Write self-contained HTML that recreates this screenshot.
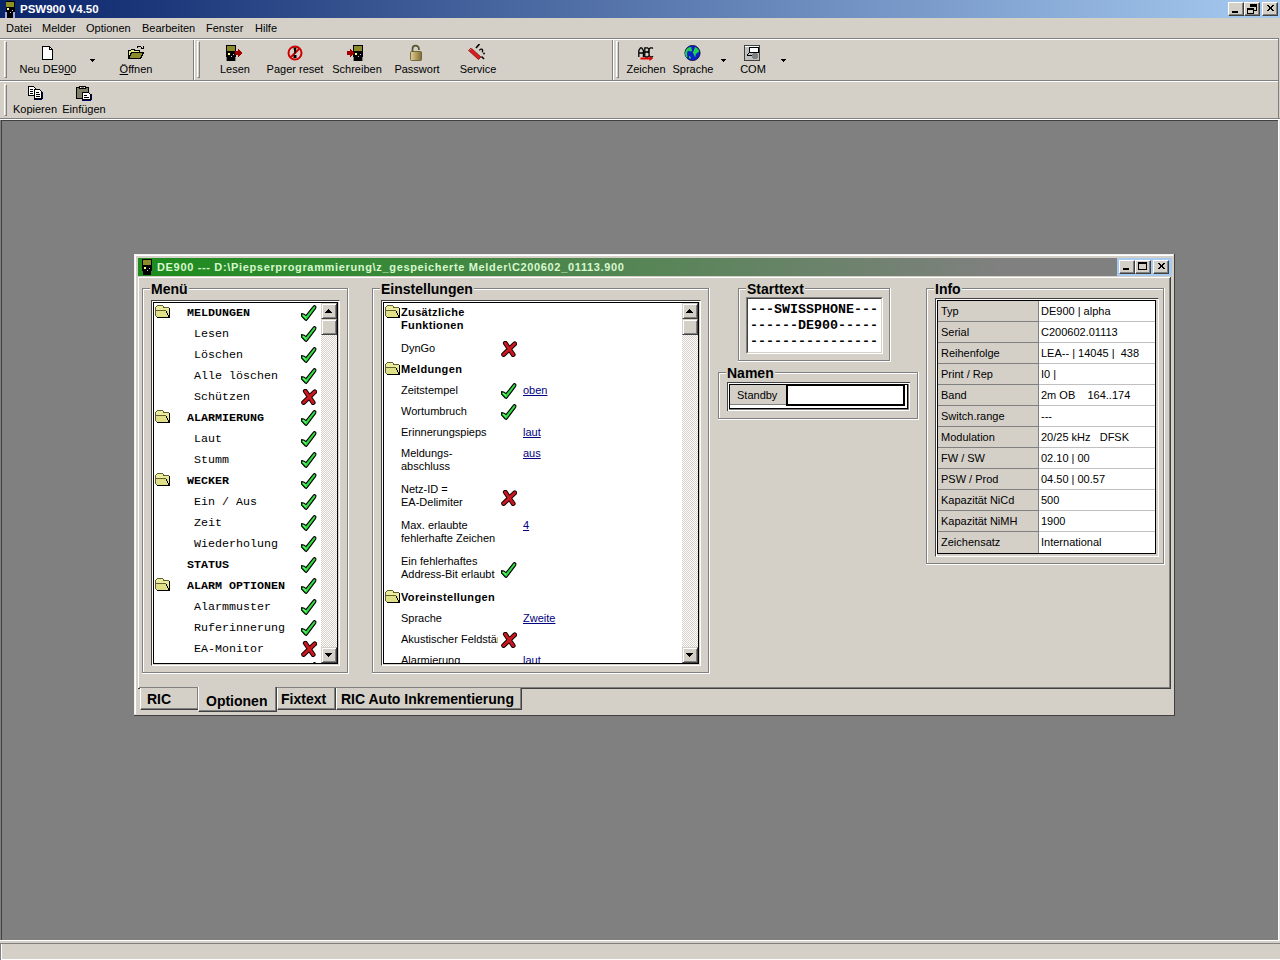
<!DOCTYPE html>
<html><head><meta charset="utf-8">
<style>
*{box-sizing:border-box;margin:0;padding:0}
html,body{width:1280px;height:960px;overflow:hidden;background:#d4d0c8}
body{position:relative;font-family:"Liberation Sans",sans-serif;font-size:11px;color:#000}
.a{position:absolute}
.t{position:absolute;white-space:pre;line-height:1}
.hl{position:absolute;height:1px}
.vl{position:absolute;width:1px}
.btn{position:absolute;background:#d4d0c8;border-top:1px solid #fff;border-left:1px solid #fff;border-right:1px solid #404040;border-bottom:1px solid #404040;box-shadow:inset -1px -1px 0 #808080}
</style></head><body>

<!-- main title bar -->
<div class="a" style="left:0;top:0;width:1280px;height:18px;background:linear-gradient(to right,#0a246a,#a6caf0)"></div>
<div class="t" style="left:20px;top:4px;font-weight:bold;font-size:11.5px;color:#fff">PSW900 V4.50</div>

<svg class="a" style="left:5px;top:1px" width="11" height="17" shape-rendering="crispEdges">
<rect x="1" y="0" width="9" height="16" fill="#000"/><rect x="1" y="1" width="8" height="5" fill="#8c9020"/>
<rect x="2" y="7" width="2" height="2" fill="#ffffb0"/><rect x="7" y="9" width="1" height="1" fill="#e0f0c0"/><rect x="5" y="11" width="1" height="1" fill="#e0d0ff"/>
<rect x="0" y="11" width="2" height="6" fill="#a0a8e0"/><rect x="8" y="11" width="2" height="6" fill="#a0a8e0"/><rect x="2" y="15" width="6" height="2" fill="#000"/></svg>
<!-- menu bar -->
<div class="t" style="left:6px;top:23px">Datei</div>
<div class="t" style="left:42px;top:23px">Melder</div>
<div class="t" style="left:86px;top:23px">Optionen</div>
<div class="t" style="left:142px;top:23px">Bearbeiten</div>
<div class="t" style="left:206px;top:23px">Fenster</div>
<div class="t" style="left:255px;top:23px">Hilfe</div>

<!-- coolbar -->
<div class="hl" style="left:0;top:38px;width:1279px;background:#808080"></div>
<div class="hl" style="left:0;top:39px;width:1279px;background:#fff"></div>


<!-- coolbar bands -->
<div class="hl" style="left:0;top:80px;width:1279px;background:#808080"></div>
<div class="hl" style="left:0;top:81px;width:1279px;background:#fff"></div>
<div class="vl" style="left:1278px;top:38px;height:81px;background:#808080"></div>
<div class="vl" style="left:193px;top:40px;height:40px;background:#808080"></div>
<div class="vl" style="left:194px;top:40px;height:40px;background:#fff"></div>
<div class="vl" style="left:612px;top:40px;height:40px;background:#808080"></div>
<div class="vl" style="left:613px;top:40px;height:40px;background:#fff"></div>
<!-- grippers -->
<div class="a" style="left:4px;top:41px;width:3px;height:37px;border-left:1px solid #fff;border-top:1px solid #fff;border-right:1px solid #808080;border-bottom:1px solid #808080"></div>
<div class="a" style="left:197px;top:41px;width:3px;height:37px;border-left:1px solid #fff;border-top:1px solid #fff;border-right:1px solid #808080;border-bottom:1px solid #808080"></div>
<div class="a" style="left:616px;top:41px;width:3px;height:37px;border-left:1px solid #fff;border-top:1px solid #fff;border-right:1px solid #808080;border-bottom:1px solid #808080"></div>
<div class="a" style="left:4px;top:84px;width:3px;height:32px;border-left:1px solid #fff;border-top:1px solid #fff;border-right:1px solid #808080;border-bottom:1px solid #808080"></div>

<!-- toolbar labels -->
<div class="t" style="left:-2px;width:100px;text-align:center;top:64px">Neu DE9<u>0</u>0</div>
<div class="t" style="left:86px;width:100px;text-align:center;top:64px"><u>Ö</u>ffnen</div>
<div class="t" style="left:185px;width:100px;text-align:center;top:64px">Lesen</div>
<div class="t" style="left:245px;width:100px;text-align:center;top:64px">Pager reset</div>
<div class="t" style="left:307px;width:100px;text-align:center;top:64px">Schreiben</div>
<div class="t" style="left:367px;width:100px;text-align:center;top:64px">Passwort</div>
<div class="t" style="left:428px;width:100px;text-align:center;top:64px">Service</div>
<div class="t" style="left:596px;width:100px;text-align:center;top:64px">Zeichen</div>
<div class="t" style="left:643px;width:100px;text-align:center;top:64px">Sprache</div>
<div class="t" style="left:703px;width:100px;text-align:center;top:64px">COM</div>
<div class="t" style="left:-15px;width:100px;text-align:center;top:104px">Kopieren</div>
<div class="t" style="left:34px;width:100px;text-align:center;top:104px">Einfügen</div>
<!-- dropdown arrows -->
<svg class="a" style="left:90px;top:59px" width="5" height="3" shape-rendering="crispEdges"><path d="M0 0h5v1h-1v1h-1v1h-1v-1h-1v-1h-1z" fill="#000"/></svg>
<svg class="a" style="left:721px;top:59px" width="5" height="3" shape-rendering="crispEdges"><path d="M0 0h5v1h-1v1h-1v1h-1v-1h-1v-1h-1z" fill="#000"/></svg>
<svg class="a" style="left:781px;top:59px" width="5" height="3" shape-rendering="crispEdges"><path d="M0 0h5v1h-1v1h-1v1h-1v-1h-1v-1h-1z" fill="#000"/></svg>

<!-- icons -->
<!-- new doc -->
<svg class="a" style="left:40px;top:45px" width="16" height="16" shape-rendering="crispEdges">
<path d="M2.5 1.5h7l3 3v10h-10z" fill="#fff" stroke="#000"/><path d="M9.5 1.5v3h3" fill="none" stroke="#000"/></svg>
<!-- open folder -->
<svg class="a" style="left:128px;top:45px" width="16" height="16" shape-rendering="crispEdges">
<path d="M0.5 5.5h2l1-1h3v1h5v2h-8l-3 6z" fill="#e8e880" stroke="#000"/>
<path d="M0.5 13.5l3-6h12l-3 6z" fill="#8b8b2a" stroke="#000"/>
<path d="M9 2.5c2-2 4-1 5 1" fill="none" stroke="#000"/><path d="M13 3h2v-2" fill="none" stroke="#000"/></svg>
<!-- Lesen: pager + arrow right -->
<svg class="a" style="left:226px;top:45px" width="17" height="17" shape-rendering="crispEdges">
<rect x="0" y="0" width="10" height="16" rx="1" fill="#000"/>
<rect x="1" y="1" width="8" height="5" fill="#8b8b2a"/>
<rect x="2" y="8" width="2" height="2" fill="#ffff80"/><rect x="7" y="9" width="1" height="1" fill="#c0c0ff"/><rect x="5" y="11" width="1" height="1" fill="#c0c0ff"/>
<rect x="0" y="12" width="1" height="4" fill="#808080"/><rect x="9" y="12" width="1" height="4" fill="#808080"/>
<path d="M9 6h3v-2l4 4l-4 4v-2h-3z" fill="#a00000"/></svg>
<!-- Pager reset -->
<svg class="a" style="left:287px;top:45px" width="16" height="16">
<circle cx="8" cy="8" r="6.5" fill="none" stroke="#d00000" stroke-width="2"/>
<path d="M3.5 12.5l9-9" stroke="#d00000" stroke-width="2"/>
<path d="M6.5 2.5h3l-1 6h-1z" fill="#000"/><rect x="6.5" y="10" width="3" height="3" fill="#000"/></svg>
<!-- Schreiben: arrow + pager -->
<svg class="a" style="left:347px;top:45px" width="17" height="17" shape-rendering="crispEdges">
<rect x="6" y="0" width="10" height="16" rx="1" fill="#000"/>
<rect x="7" y="1" width="8" height="5" fill="#8b8b2a"/>
<rect x="8" y="8" width="2" height="2" fill="#ffff80"/><rect x="13" y="9" width="1" height="1" fill="#c0c0ff"/><rect x="11" y="11" width="1" height="1" fill="#c0c0ff"/>
<rect x="6" y="12" width="1" height="4" fill="#808080"/><rect x="15" y="12" width="1" height="4" fill="#808080"/>
<path d="M0 6h3v-2l4 4l-4 4v-2h-3z" fill="#a00000"/></svg>
<!-- Passwort: padlock -->
<svg class="a" style="left:409px;top:44px" width="15" height="17">
<defs><linearGradient id="lg" x1="0" x2="1"><stop offset="0" stop-color="#e0d098"/><stop offset="1" stop-color="#806c30"/></linearGradient></defs>
<path d="M3.5 8.5V4.8a3.2 3.2 0 0 1 6.4 0V6" fill="none" stroke="#5a5030" stroke-width="1.7"/>
<rect x="1.5" y="7.5" width="11" height="9" rx="1" fill="url(#lg)" stroke="#605028" stroke-width="0.8"/></svg>
<!-- Service: swiss knife -->
<svg class="a" style="left:468px;top:44px" width="18" height="17">
<path d="M0.5 6.5l2.5-2.5l10 9l-2.5 2.5z" fill="#d81c20" stroke="#700" stroke-width="0.7"/>
<path d="M1.5 6.5l2-2" stroke="#ff8080" stroke-width="0.8"/>
<path d="M8 4l3.5-4" stroke="#000" stroke-width="1.6"/>
<path d="M11.5 6.5a1.6 1.6 0 1 1 2.4 1.6" fill="none" stroke="#000" stroke-width="1.3"/>
<circle cx="16" cy="9.5" r="0.9" fill="#000"/><path d="M13.5 12.5l2.5 2.5" stroke="#000" stroke-width="1.6"/></svg>
<!-- Zeichen ABC -->
<svg class="a" style="left:638px;top:47px" width="17" height="15">
<path d="M0.8 10V3.5L2.5 0.8h1.2L5.4 3.5V10M0.8 6h4.6M6.8 10V0.8h2.7l1.4 1.3v1.6L9.6 5H6.8M9.6 5l1.5 1.2v2.4L9.8 10H6.8M15 1.6L14 0.8h-1.6l-1.3 1.4v6.6l1.3 1.2H14l1-0.8" fill="none" stroke="#000" stroke-width="1.3"/>
<path d="M2.5 10.5h9v-1.5l3.5 2.5l-3.5 2.5v-1.5h-9z" fill="#e00000"/></svg>
<!-- Sprache globe -->
<svg class="a" style="left:684px;top:45px" width="17" height="17">
<circle cx="8.5" cy="8" r="7.6" fill="#0c20c8" stroke="#000030" stroke-width="0.8"/>
<path d="M2 5c1-2 3-3 5-3c1 1 0 2 1 3s-2 2-3 1s-2 1-2 3s1 2 0 4c-1-1-2-3-2-5z" fill="#20d050"/>
<path d="M11 2c2 1 4 2 4 5c-1 0-2 1-3 2s0 3-1 3c-1-1-1-3-2-4s1-2 1-3z" fill="#20d050"/><path d="M5 11c1 0 2 1 2 2s-1 1-2 0z" fill="#20d050"/></svg>
<!-- COM -->
<svg class="a" style="left:744px;top:45px" width="17" height="16" shape-rendering="crispEdges">
<rect x="0.5" y="0.5" width="15" height="15" fill="#c0c0c0" stroke="#404040"/><rect x="1" y="1" width="14" height="1" fill="#fff"/>
<rect x="5" y="2" width="9" height="5" fill="#fff" stroke="#000" stroke-width="1"/><path d="M3 10l3-3M3 10h5" stroke="#000"/><circle cx="11" cy="11" r="3" fill="#808080"/></svg>
<!-- Kopieren -->
<svg class="a" style="left:28px;top:86px" width="16" height="14" shape-rendering="crispEdges">
<path d="M0.5 0.5h5l2 2v7h-7z" fill="#fff" stroke="#000"/><path d="M2 3h3M2 5h3M2 7h3" stroke="#000"/>
<path d="M6.5 3.5h5l2 2v7h-7z" fill="#fff" stroke="#000" /><path d="M8 6h3M8 8h4M8 10h4" stroke="#000"/><path d="M6 13h8M14 6v7" stroke="#000040"/></svg>
<!-- Einfügen -->
<svg class="a" style="left:76px;top:86px" width="16" height="15" shape-rendering="crispEdges">
<path d="M0.5 1.5h12v11h-12z" fill="#808068" stroke="#000"/><path d="M3.5 0.5h6v2h-6z" fill="#fff" stroke="#000"/><path d="M5 1h3" stroke="#808068"/>
<path d="M6.5 6.5h6l2 2v5h-8z" fill="#fff" stroke="#000"/><path d="M8 9h3M8 11h5" stroke="#000"/><path d="M6 14h9M15 8v6" stroke="#000060"/></svg>

<!-- title bar buttons -->
<div class="btn" style="left:1228px;top:2px;width:16px;height:14px"></div>
<div class="btn" style="left:1244px;top:2px;width:16px;height:14px"></div>
<div class="btn" style="left:1262px;top:2px;width:16px;height:14px"></div>
<svg class="a" style="left:1228px;top:2px" width="50" height="14" shape-rendering="crispEdges">
<rect x="4" y="9" width="6" height="2" fill="#000"/>
<path d="M22 3h6v5h-2M22 3v2M22 4h6" fill="none" stroke="#000" stroke-width="1"/>
<rect x="19.5" y="6.5" width="6" height="5" fill="none" stroke="#000"/><rect x="19" y="6" width="7" height="2" fill="#000"/><rect x="22" y="2" width="7" height="2" fill="#000"/><rect x="28" y="3" width="1" height="6" fill="#000"/>
<path d="M38 3l2 0l2 2l2-2h2l-3 3l3 3h-2l-2-2l-2 2h-2l3-3z" fill="#000"/>
</svg>

<!-- MDI client -->
<div class="a" style="left:0;top:118px;width:1280px;height:1px;background:#808080"></div>
<div class="a" style="left:0;top:119px;width:1280px;height:1px;background:#fff"></div>
<div class="a" style="left:1px;top:120px;width:1279px;height:820px;background:#808080;border-top:1px solid #404040;border-left:1px solid #404040"></div>
<div class="vl" style="left:0;top:120px;height:820px;background:#808080"></div>
<div class="hl" style="left:0;top:940px;width:1280px;background:#fff"></div>
<div class="a" style="left:1278px;top:120px;width:2px;height:821px;background:#fff;border-right:1px solid #e8e8e8"></div>
<!-- status bar -->
<div class="hl" style="left:0;top:943px;width:1280px;background:#808080"></div>
<div class="hl" style="left:0;top:959px;width:1280px;background:#fff"></div>
<div class="vl" style="left:0;top:943px;height:17px;background:#808080"></div><div class="vl" style="left:1px;top:944px;height:15px;background:#fff"></div>

<!-- MDI CHILD START -->
<div class="a" style="left:134px;top:254px;width:1041px;height:462px;background:#d4d0c8;"></div>
<div class="hl" style="left:134px;top:254px;width:1040px;background:#f0f0f0"></div>
<div class="vl" style="left:134px;top:254px;height:461px;background:#f0f0f0"></div>
<div class="hl" style="left:135px;top:255px;width:1038px;background:#fff"></div>
<div class="vl" style="left:135px;top:255px;height:459px;background:#fff"></div>
<div class="hl" style="left:134px;top:715px;width:1041px;background:#404040"></div>
<div class="vl" style="left:1174px;top:254px;height:462px;background:#404040"></div>
<div class="a" style="left:138px;top:258px;width:1034px;height:18px;background:linear-gradient(to right,#1c8c1c 0%,#808080 84%)"></div>
<div class="a" style="left:1117px;top:258px;width:55px;height:18px;background:#a6caf0;"></div>
<div class="t" style="left:157px;top:262px;font-weight:bold;font-size:11px;letter-spacing:0.66px;color:#d8f8d0">DE900 --- D:\Piepserprogrammierung\z_gespeicherte Melder\C200602_01113.900</div>
<svg class="a" style="left:141px;top:259px" width="12" height="17" shape-rendering="crispEdges">
<rect x="1" y="0" width="10" height="16" fill="#000"/><rect x="2" y="1" width="8" height="5" fill="#8b8b2a"/>
<rect x="3" y="8" width="2" height="2" fill="#ffff80"/><rect x="8" y="9" width="1" height="1" fill="#c0c0ff"/><rect x="6" y="11" width="1" height="1" fill="#c0c0ff"/>
<rect x="0" y="12" width="2" height="4" fill="#1c8c1c"/><rect x="10" y="12" width="2" height="4" fill="#1c8c1c"/></svg>
<div class="btn" style="left:1119px;top:260px;width:16px;height:14px"></div>
<div class="btn" style="left:1135px;top:260px;width:16px;height:14px"></div>
<div class="btn" style="left:1153px;top:260px;width:16px;height:14px"></div>
<svg class="a" style="left:1119px;top:260px" width="50" height="14" shape-rendering="crispEdges">
<rect x="4" y="8" width="6" height="2" fill="#000"/>
<rect x="19.5" y="2.5" width="8" height="7" fill="none" stroke="#000"/><rect x="19" y="2" width="9" height="2" fill="#000"/>
<path d="M38 3h2l2 2l2-2h2l-3 3l3 3h-2l-2-2l-2 2h-2l3-3z" fill="#000"/></svg>
<div class="hl" style="left:138px;top:277px;width:1032px;background:#fff"></div>
<div class="vl" style="left:138px;top:277px;height:411px;background:#fff"></div>
<div class="vl" style="left:1170px;top:277px;height:412px;background:#404040"></div>
<div class="vl" style="left:1169px;top:278px;height:410px;background:#808080"></div>
<div class="hl" style="left:138px;top:688px;width:1033px;background:#404040"></div>
<div class="hl" style="left:139px;top:687px;width:1031px;background:#808080"></div>
<div class="hl" style="left:142px;top:288px;width:206px;background:#808080"></div>
<div class="vl" style="left:142px;top:288px;height:385px;background:#808080"></div>
<div class="hl" style="left:143px;top:289px;width:204px;background:#fff"></div>
<div class="vl" style="left:143px;top:289px;height:383px;background:#fff"></div>
<div class="hl" style="left:142px;top:672px;width:206px;background:#808080"></div>
<div class="vl" style="left:347px;top:288px;height:385px;background:#808080"></div>
<div class="hl" style="left:142px;top:673px;width:207px;background:#fff"></div>
<div class="vl" style="left:348px;top:288px;height:386px;background:#fff"></div>
<div class="t" style="left:150px;top:282px;font-weight:bold;font-size:14px;background:#d4d0c8;padding:0 1px">Menü</div>
<div class="hl" style="left:372px;top:288px;width:337px;background:#808080"></div>
<div class="vl" style="left:372px;top:288px;height:385px;background:#808080"></div>
<div class="hl" style="left:373px;top:289px;width:335px;background:#fff"></div>
<div class="vl" style="left:373px;top:289px;height:383px;background:#fff"></div>
<div class="hl" style="left:372px;top:672px;width:337px;background:#808080"></div>
<div class="vl" style="left:708px;top:288px;height:385px;background:#808080"></div>
<div class="hl" style="left:372px;top:673px;width:338px;background:#fff"></div>
<div class="vl" style="left:709px;top:288px;height:386px;background:#fff"></div>
<div class="t" style="left:380px;top:282px;font-weight:bold;font-size:14px;background:#d4d0c8;padding:0 1px">Einstellungen</div>
<div class="hl" style="left:738px;top:288px;width:152px;background:#808080"></div>
<div class="vl" style="left:738px;top:288px;height:73px;background:#808080"></div>
<div class="hl" style="left:739px;top:289px;width:150px;background:#fff"></div>
<div class="vl" style="left:739px;top:289px;height:71px;background:#fff"></div>
<div class="hl" style="left:738px;top:360px;width:152px;background:#808080"></div>
<div class="vl" style="left:889px;top:288px;height:73px;background:#808080"></div>
<div class="hl" style="left:738px;top:361px;width:153px;background:#fff"></div>
<div class="vl" style="left:890px;top:288px;height:74px;background:#fff"></div>
<div class="t" style="left:746px;top:282px;font-weight:bold;font-size:14px;background:#d4d0c8;padding:0 1px">Starttext</div>
<div class="hl" style="left:718px;top:372px;width:200px;background:#808080"></div>
<div class="vl" style="left:718px;top:372px;height:47px;background:#808080"></div>
<div class="hl" style="left:719px;top:373px;width:198px;background:#fff"></div>
<div class="vl" style="left:719px;top:373px;height:45px;background:#fff"></div>
<div class="hl" style="left:718px;top:418px;width:200px;background:#808080"></div>
<div class="vl" style="left:917px;top:372px;height:47px;background:#808080"></div>
<div class="hl" style="left:718px;top:419px;width:201px;background:#fff"></div>
<div class="vl" style="left:918px;top:372px;height:48px;background:#fff"></div>
<div class="t" style="left:726px;top:366px;font-weight:bold;font-size:14px;background:#d4d0c8;padding:0 1px">Namen</div>
<div class="hl" style="left:926px;top:288px;width:238px;background:#808080"></div>
<div class="vl" style="left:926px;top:288px;height:276px;background:#808080"></div>
<div class="hl" style="left:927px;top:289px;width:236px;background:#fff"></div>
<div class="vl" style="left:927px;top:289px;height:274px;background:#fff"></div>
<div class="hl" style="left:926px;top:563px;width:238px;background:#808080"></div>
<div class="vl" style="left:1163px;top:288px;height:276px;background:#808080"></div>
<div class="hl" style="left:926px;top:564px;width:239px;background:#fff"></div>
<div class="vl" style="left:1164px;top:288px;height:277px;background:#fff"></div>
<div class="t" style="left:934px;top:282px;font-weight:bold;font-size:14px;background:#d4d0c8;padding:0 1px">Info</div>
<div class="a" style="left:151px;top:300px;width:189px;height:366px;background:#fff;border-left:1px solid #404040;border-top:1px solid #404040;border-right:1px solid #fff;border-bottom:1px solid #fff"></div>
<div class="a" style="left:152px;top:301px;width:187px;height:364px;background:#d4d0c8;border-left:1px solid #fff;border-top:1px solid #fff"></div>
<div class="a" style="left:153px;top:302px;width:185px;height:362px;background:#fff;border:1px solid #000"></div>
<div class="a" style="left:154px;top:303px;width:167px;height:360px;overflow:hidden">
<svg class="a" style="left:1px;top:2px" width="16" height="14" shape-rendering="crispEdges"><path d="M0 2L2 0H8V2H14V13H2L0 11Z" fill="#ecec9c"/><rect x="1" y="6" width="12" height="6" fill="#e0e088"/><rect x="2" y="0" width="6" height="1" fill="#606030"/><rect x="1" y="1" width="1" height="1" fill="#606030"/><rect x="8" y="1" width="1" height="1" fill="#606030"/><rect x="8" y="2" width="6" height="1" fill="#606030"/><rect x="0" y="2" width="1" height="9" fill="#606030"/><rect x="0" y="5" width="11" height="1" fill="#606030"/><rect x="1" y="11" width="1" height="1" fill="#606030"/><rect x="2" y="12" width="13" height="1" fill="#000"/><rect x="14" y="3" width="1" height="10" fill="#000"/><rect x="11" y="6" width="1" height="2" fill="#000"/><rect x="12" y="8" width="1" height="2" fill="#000"/><rect x="13" y="10" width="1" height="2" fill="#000"/></svg>
<div class="t" style="left:33px;top:5px;font-family:'Liberation Mono',monospace;font-size:11.67px;font-weight:bold;">MELDUNGEN</div>
<svg class="a" style="left:147px;top:2px" width="16" height="16"><path d="M0.6 8.6L3.4 9.3L4.9 10.7L12.7 0.9L13.7 0.4L15 1.8L14.6 3.4L6.5 14.2L5.4 15.5L4.3 15L0.6 11.2Z" fill="#30e040" stroke="#000" stroke-width="1.1" stroke-linejoin="round"/><path d="M2 10l3 2.5" stroke="#80ff90" stroke-width="0.9"/></svg>
<div class="t" style="left:40px;top:26px;font-family:'Liberation Mono',monospace;font-size:11.67px;">Lesen</div>
<svg class="a" style="left:147px;top:23px" width="16" height="16"><path d="M0.6 8.6L3.4 9.3L4.9 10.7L12.7 0.9L13.7 0.4L15 1.8L14.6 3.4L6.5 14.2L5.4 15.5L4.3 15L0.6 11.2Z" fill="#30e040" stroke="#000" stroke-width="1.1" stroke-linejoin="round"/><path d="M2 10l3 2.5" stroke="#80ff90" stroke-width="0.9"/></svg>
<div class="t" style="left:40px;top:47px;font-family:'Liberation Mono',monospace;font-size:11.67px;">Löschen</div>
<svg class="a" style="left:147px;top:44px" width="16" height="16"><path d="M0.6 8.6L3.4 9.3L4.9 10.7L12.7 0.9L13.7 0.4L15 1.8L14.6 3.4L6.5 14.2L5.4 15.5L4.3 15L0.6 11.2Z" fill="#30e040" stroke="#000" stroke-width="1.1" stroke-linejoin="round"/><path d="M2 10l3 2.5" stroke="#80ff90" stroke-width="0.9"/></svg>
<div class="t" style="left:40px;top:68px;font-family:'Liberation Mono',monospace;font-size:11.67px;">Alle löschen</div>
<svg class="a" style="left:147px;top:65px" width="16" height="16"><path d="M0.6 8.6L3.4 9.3L4.9 10.7L12.7 0.9L13.7 0.4L15 1.8L14.6 3.4L6.5 14.2L5.4 15.5L4.3 15L0.6 11.2Z" fill="#30e040" stroke="#000" stroke-width="1.1" stroke-linejoin="round"/><path d="M2 10l3 2.5" stroke="#80ff90" stroke-width="0.9"/></svg>
<div class="t" style="left:40px;top:89px;font-family:'Liberation Mono',monospace;font-size:11.67px;">Schützen</div>
<svg class="a" style="left:147px;top:86px" width="16" height="16"><path d="M4.3 2.2L12.2 13.6M13.8 2.8L2.6 13.5" fill="none" stroke="#100" stroke-width="4.8" stroke-linecap="round"/><path d="M4.3 2.2L12.2 13.6M13.8 2.8L2.6 13.5" fill="none" stroke="#c81820" stroke-width="2.9" stroke-linecap="round"/></svg>
<svg class="a" style="left:1px;top:107px" width="16" height="14" shape-rendering="crispEdges"><path d="M0 2L2 0H8V2H14V13H2L0 11Z" fill="#ecec9c"/><rect x="1" y="6" width="12" height="6" fill="#e0e088"/><rect x="2" y="0" width="6" height="1" fill="#606030"/><rect x="1" y="1" width="1" height="1" fill="#606030"/><rect x="8" y="1" width="1" height="1" fill="#606030"/><rect x="8" y="2" width="6" height="1" fill="#606030"/><rect x="0" y="2" width="1" height="9" fill="#606030"/><rect x="0" y="5" width="11" height="1" fill="#606030"/><rect x="1" y="11" width="1" height="1" fill="#606030"/><rect x="2" y="12" width="13" height="1" fill="#000"/><rect x="14" y="3" width="1" height="10" fill="#000"/><rect x="11" y="6" width="1" height="2" fill="#000"/><rect x="12" y="8" width="1" height="2" fill="#000"/><rect x="13" y="10" width="1" height="2" fill="#000"/></svg>
<div class="t" style="left:33px;top:110px;font-family:'Liberation Mono',monospace;font-size:11.67px;font-weight:bold;">ALARMIERUNG</div>
<svg class="a" style="left:147px;top:107px" width="16" height="16"><path d="M0.6 8.6L3.4 9.3L4.9 10.7L12.7 0.9L13.7 0.4L15 1.8L14.6 3.4L6.5 14.2L5.4 15.5L4.3 15L0.6 11.2Z" fill="#30e040" stroke="#000" stroke-width="1.1" stroke-linejoin="round"/><path d="M2 10l3 2.5" stroke="#80ff90" stroke-width="0.9"/></svg>
<div class="t" style="left:40px;top:131px;font-family:'Liberation Mono',monospace;font-size:11.67px;">Laut</div>
<svg class="a" style="left:147px;top:128px" width="16" height="16"><path d="M0.6 8.6L3.4 9.3L4.9 10.7L12.7 0.9L13.7 0.4L15 1.8L14.6 3.4L6.5 14.2L5.4 15.5L4.3 15L0.6 11.2Z" fill="#30e040" stroke="#000" stroke-width="1.1" stroke-linejoin="round"/><path d="M2 10l3 2.5" stroke="#80ff90" stroke-width="0.9"/></svg>
<div class="t" style="left:40px;top:152px;font-family:'Liberation Mono',monospace;font-size:11.67px;">Stumm</div>
<svg class="a" style="left:147px;top:149px" width="16" height="16"><path d="M0.6 8.6L3.4 9.3L4.9 10.7L12.7 0.9L13.7 0.4L15 1.8L14.6 3.4L6.5 14.2L5.4 15.5L4.3 15L0.6 11.2Z" fill="#30e040" stroke="#000" stroke-width="1.1" stroke-linejoin="round"/><path d="M2 10l3 2.5" stroke="#80ff90" stroke-width="0.9"/></svg>
<svg class="a" style="left:1px;top:170px" width="16" height="14" shape-rendering="crispEdges"><path d="M0 2L2 0H8V2H14V13H2L0 11Z" fill="#ecec9c"/><rect x="1" y="6" width="12" height="6" fill="#e0e088"/><rect x="2" y="0" width="6" height="1" fill="#606030"/><rect x="1" y="1" width="1" height="1" fill="#606030"/><rect x="8" y="1" width="1" height="1" fill="#606030"/><rect x="8" y="2" width="6" height="1" fill="#606030"/><rect x="0" y="2" width="1" height="9" fill="#606030"/><rect x="0" y="5" width="11" height="1" fill="#606030"/><rect x="1" y="11" width="1" height="1" fill="#606030"/><rect x="2" y="12" width="13" height="1" fill="#000"/><rect x="14" y="3" width="1" height="10" fill="#000"/><rect x="11" y="6" width="1" height="2" fill="#000"/><rect x="12" y="8" width="1" height="2" fill="#000"/><rect x="13" y="10" width="1" height="2" fill="#000"/></svg>
<div class="t" style="left:33px;top:173px;font-family:'Liberation Mono',monospace;font-size:11.67px;font-weight:bold;">WECKER</div>
<svg class="a" style="left:147px;top:170px" width="16" height="16"><path d="M0.6 8.6L3.4 9.3L4.9 10.7L12.7 0.9L13.7 0.4L15 1.8L14.6 3.4L6.5 14.2L5.4 15.5L4.3 15L0.6 11.2Z" fill="#30e040" stroke="#000" stroke-width="1.1" stroke-linejoin="round"/><path d="M2 10l3 2.5" stroke="#80ff90" stroke-width="0.9"/></svg>
<div class="t" style="left:40px;top:194px;font-family:'Liberation Mono',monospace;font-size:11.67px;">Ein / Aus</div>
<svg class="a" style="left:147px;top:191px" width="16" height="16"><path d="M0.6 8.6L3.4 9.3L4.9 10.7L12.7 0.9L13.7 0.4L15 1.8L14.6 3.4L6.5 14.2L5.4 15.5L4.3 15L0.6 11.2Z" fill="#30e040" stroke="#000" stroke-width="1.1" stroke-linejoin="round"/><path d="M2 10l3 2.5" stroke="#80ff90" stroke-width="0.9"/></svg>
<div class="t" style="left:40px;top:215px;font-family:'Liberation Mono',monospace;font-size:11.67px;">Zeit</div>
<svg class="a" style="left:147px;top:212px" width="16" height="16"><path d="M0.6 8.6L3.4 9.3L4.9 10.7L12.7 0.9L13.7 0.4L15 1.8L14.6 3.4L6.5 14.2L5.4 15.5L4.3 15L0.6 11.2Z" fill="#30e040" stroke="#000" stroke-width="1.1" stroke-linejoin="round"/><path d="M2 10l3 2.5" stroke="#80ff90" stroke-width="0.9"/></svg>
<div class="t" style="left:40px;top:236px;font-family:'Liberation Mono',monospace;font-size:11.67px;">Wiederholung</div>
<svg class="a" style="left:147px;top:233px" width="16" height="16"><path d="M0.6 8.6L3.4 9.3L4.9 10.7L12.7 0.9L13.7 0.4L15 1.8L14.6 3.4L6.5 14.2L5.4 15.5L4.3 15L0.6 11.2Z" fill="#30e040" stroke="#000" stroke-width="1.1" stroke-linejoin="round"/><path d="M2 10l3 2.5" stroke="#80ff90" stroke-width="0.9"/></svg>
<div class="t" style="left:33px;top:257px;font-family:'Liberation Mono',monospace;font-size:11.67px;font-weight:bold;">STATUS</div>
<svg class="a" style="left:147px;top:254px" width="16" height="16"><path d="M0.6 8.6L3.4 9.3L4.9 10.7L12.7 0.9L13.7 0.4L15 1.8L14.6 3.4L6.5 14.2L5.4 15.5L4.3 15L0.6 11.2Z" fill="#30e040" stroke="#000" stroke-width="1.1" stroke-linejoin="round"/><path d="M2 10l3 2.5" stroke="#80ff90" stroke-width="0.9"/></svg>
<svg class="a" style="left:1px;top:275px" width="16" height="14" shape-rendering="crispEdges"><path d="M0 2L2 0H8V2H14V13H2L0 11Z" fill="#ecec9c"/><rect x="1" y="6" width="12" height="6" fill="#e0e088"/><rect x="2" y="0" width="6" height="1" fill="#606030"/><rect x="1" y="1" width="1" height="1" fill="#606030"/><rect x="8" y="1" width="1" height="1" fill="#606030"/><rect x="8" y="2" width="6" height="1" fill="#606030"/><rect x="0" y="2" width="1" height="9" fill="#606030"/><rect x="0" y="5" width="11" height="1" fill="#606030"/><rect x="1" y="11" width="1" height="1" fill="#606030"/><rect x="2" y="12" width="13" height="1" fill="#000"/><rect x="14" y="3" width="1" height="10" fill="#000"/><rect x="11" y="6" width="1" height="2" fill="#000"/><rect x="12" y="8" width="1" height="2" fill="#000"/><rect x="13" y="10" width="1" height="2" fill="#000"/></svg>
<div class="t" style="left:33px;top:278px;font-family:'Liberation Mono',monospace;font-size:11.67px;font-weight:bold;">ALARM OPTIONEN</div>
<svg class="a" style="left:147px;top:275px" width="16" height="16"><path d="M0.6 8.6L3.4 9.3L4.9 10.7L12.7 0.9L13.7 0.4L15 1.8L14.6 3.4L6.5 14.2L5.4 15.5L4.3 15L0.6 11.2Z" fill="#30e040" stroke="#000" stroke-width="1.1" stroke-linejoin="round"/><path d="M2 10l3 2.5" stroke="#80ff90" stroke-width="0.9"/></svg>
<div class="t" style="left:40px;top:299px;font-family:'Liberation Mono',monospace;font-size:11.67px;">Alarmmuster</div>
<svg class="a" style="left:147px;top:296px" width="16" height="16"><path d="M0.6 8.6L3.4 9.3L4.9 10.7L12.7 0.9L13.7 0.4L15 1.8L14.6 3.4L6.5 14.2L5.4 15.5L4.3 15L0.6 11.2Z" fill="#30e040" stroke="#000" stroke-width="1.1" stroke-linejoin="round"/><path d="M2 10l3 2.5" stroke="#80ff90" stroke-width="0.9"/></svg>
<div class="t" style="left:40px;top:320px;font-family:'Liberation Mono',monospace;font-size:11.67px;">Ruferinnerung</div>
<svg class="a" style="left:147px;top:317px" width="16" height="16"><path d="M0.6 8.6L3.4 9.3L4.9 10.7L12.7 0.9L13.7 0.4L15 1.8L14.6 3.4L6.5 14.2L5.4 15.5L4.3 15L0.6 11.2Z" fill="#30e040" stroke="#000" stroke-width="1.1" stroke-linejoin="round"/><path d="M2 10l3 2.5" stroke="#80ff90" stroke-width="0.9"/></svg>
<div class="t" style="left:40px;top:341px;font-family:'Liberation Mono',monospace;font-size:11.67px;">EA-Monitor</div>
<svg class="a" style="left:147px;top:338px" width="16" height="16"><path d="M4.3 2.2L12.2 13.6M13.8 2.8L2.6 13.5" fill="none" stroke="#100" stroke-width="4.8" stroke-linecap="round"/><path d="M4.3 2.2L12.2 13.6M13.8 2.8L2.6 13.5" fill="none" stroke="#c81820" stroke-width="2.9" stroke-linecap="round"/></svg>
<svg class="a" style="left:147px;top:359px" width="16" height="16"><path d="M0.6 8.6L3.4 9.3L4.9 10.7L12.7 0.9L13.7 0.4L15 1.8L14.6 3.4L6.5 14.2L5.4 15.5L4.3 15L0.6 11.2Z" fill="#30e040" stroke="#000" stroke-width="1.1" stroke-linejoin="round"/><path d="M2 10l3 2.5" stroke="#80ff90" stroke-width="0.9"/></svg>
</div>
<div class="a" style="left:321px;top:303px;width:16px;height:360px;background-color:#fff;background-image:repeating-conic-gradient(#d4d0c8 0 25%,#fff 0 50%);background-size:2px 2px"></div>
<div class="btn" style="left:321px;top:303px;width:16px;height:16px;border-top-color:#d4d0c8;border-left-color:#d4d0c8;box-shadow:inset 1px 1px 0 #fff,inset -1px -1px 0 #808080"></div>
<div class="btn" style="left:321px;top:319px;width:16px;height:16px;border-top-color:#d4d0c8;border-left-color:#d4d0c8;box-shadow:inset 1px 1px 0 #fff,inset -1px -1px 0 #808080"></div>
<div class="btn" style="left:321px;top:647px;width:16px;height:16px;border-top-color:#d4d0c8;border-left-color:#d4d0c8;box-shadow:inset 1px 1px 0 #fff,inset -1px -1px 0 #808080"></div>
<svg class="a" style="left:321px;top:303px" width="16" height="16" shape-rendering="crispEdges"><path d="M4 10h7v-1h-1v-1h-1v-1h-1v-1h-1v1h-1v1h-1v1h-1z" fill="#000"/></svg>
<svg class="a" style="left:321px;top:647px" width="16" height="16" shape-rendering="crispEdges"><path d="M4 6h7v1h-1v1h-1v1h-1v1h-1v-1h-1v-1h-1v-1h-1z" fill="#000"/></svg>
<div class="a" style="left:381px;top:300px;width:320px;height:366px;background:#fff;border-left:1px solid #404040;border-top:1px solid #404040;border-right:1px solid #fff;border-bottom:1px solid #fff"></div>
<div class="a" style="left:382px;top:301px;width:318px;height:364px;background:#d4d0c8;border-left:1px solid #fff;border-top:1px solid #fff"></div>
<div class="a" style="left:383px;top:302px;width:316px;height:362px;background:#fff;border:1px solid #000"></div>
<div class="a" style="left:384px;top:303px;width:298px;height:360px;overflow:hidden">
<svg class="a" style="left:1px;top:2px" width="16" height="14" shape-rendering="crispEdges"><path d="M0 2L2 0H8V2H14V13H2L0 11Z" fill="#ecec9c"/><rect x="1" y="6" width="12" height="6" fill="#e0e088"/><rect x="2" y="0" width="6" height="1" fill="#606030"/><rect x="1" y="1" width="1" height="1" fill="#606030"/><rect x="8" y="1" width="1" height="1" fill="#606030"/><rect x="8" y="2" width="6" height="1" fill="#606030"/><rect x="0" y="2" width="1" height="9" fill="#606030"/><rect x="0" y="5" width="11" height="1" fill="#606030"/><rect x="1" y="11" width="1" height="1" fill="#606030"/><rect x="2" y="12" width="13" height="1" fill="#000"/><rect x="14" y="3" width="1" height="10" fill="#000"/><rect x="11" y="6" width="1" height="2" fill="#000"/><rect x="12" y="8" width="1" height="2" fill="#000"/><rect x="13" y="10" width="1" height="2" fill="#000"/></svg>
<div class="t" style="left:17px;top:4.2px;font-weight:bold;letter-spacing:0.35px;">Zusätzliche</div>
<div class="t" style="left:17px;top:17.2px;font-weight:bold;letter-spacing:0.35px;">Funktionen</div>
<div class="t" style="left:17px;top:40.2px;">DynGo</div>
<svg class="a" style="left:117px;top:38px" width="16" height="16"><path d="M4.3 2.2L12.2 13.6M13.8 2.8L2.6 13.5" fill="none" stroke="#100" stroke-width="4.8" stroke-linecap="round"/><path d="M4.3 2.2L12.2 13.6M13.8 2.8L2.6 13.5" fill="none" stroke="#c81820" stroke-width="2.9" stroke-linecap="round"/></svg>
<svg class="a" style="left:1px;top:59px" width="16" height="14" shape-rendering="crispEdges"><path d="M0 2L2 0H8V2H14V13H2L0 11Z" fill="#ecec9c"/><rect x="1" y="6" width="12" height="6" fill="#e0e088"/><rect x="2" y="0" width="6" height="1" fill="#606030"/><rect x="1" y="1" width="1" height="1" fill="#606030"/><rect x="8" y="1" width="1" height="1" fill="#606030"/><rect x="8" y="2" width="6" height="1" fill="#606030"/><rect x="0" y="2" width="1" height="9" fill="#606030"/><rect x="0" y="5" width="11" height="1" fill="#606030"/><rect x="1" y="11" width="1" height="1" fill="#606030"/><rect x="2" y="12" width="13" height="1" fill="#000"/><rect x="14" y="3" width="1" height="10" fill="#000"/><rect x="11" y="6" width="1" height="2" fill="#000"/><rect x="12" y="8" width="1" height="2" fill="#000"/><rect x="13" y="10" width="1" height="2" fill="#000"/></svg>
<div class="t" style="left:17px;top:61.2px;font-weight:bold;letter-spacing:0.35px;">Meldungen</div>
<div class="t" style="left:17px;top:82.2px;">Zeitstempel</div>
<svg class="a" style="left:117px;top:80px" width="16" height="16"><path d="M0.6 8.6L3.4 9.3L4.9 10.7L12.7 0.9L13.7 0.4L15 1.8L14.6 3.4L6.5 14.2L5.4 15.5L4.3 15L0.6 11.2Z" fill="#30e040" stroke="#000" stroke-width="1.1" stroke-linejoin="round"/><path d="M2 10l3 2.5" stroke="#80ff90" stroke-width="0.9"/></svg>
<div class="t" style="left:139px;top:82.2px;color:#000080;text-decoration:underline">oben</div>
<div class="t" style="left:17px;top:103.2px;">Wortumbruch</div>
<svg class="a" style="left:117px;top:101px" width="16" height="16"><path d="M0.6 8.6L3.4 9.3L4.9 10.7L12.7 0.9L13.7 0.4L15 1.8L14.6 3.4L6.5 14.2L5.4 15.5L4.3 15L0.6 11.2Z" fill="#30e040" stroke="#000" stroke-width="1.1" stroke-linejoin="round"/><path d="M2 10l3 2.5" stroke="#80ff90" stroke-width="0.9"/></svg>
<div class="t" style="left:17px;top:124.2px;">Erinnerungspieps</div>
<div class="t" style="left:139px;top:124.2px;color:#000080;text-decoration:underline">laut</div>
<div class="t" style="left:17px;top:145.2px;">Meldungs-</div>
<div class="t" style="left:17px;top:158.2px;">abschluss</div>
<div class="t" style="left:139px;top:145.2px;color:#000080;text-decoration:underline">aus</div>
<div class="t" style="left:17px;top:181.2px;">Netz-ID =</div>
<div class="t" style="left:17px;top:194.2px;">EA-Delimiter</div>
<svg class="a" style="left:117px;top:187px" width="16" height="16"><path d="M4.3 2.2L12.2 13.6M13.8 2.8L2.6 13.5" fill="none" stroke="#100" stroke-width="4.8" stroke-linecap="round"/><path d="M4.3 2.2L12.2 13.6M13.8 2.8L2.6 13.5" fill="none" stroke="#c81820" stroke-width="2.9" stroke-linecap="round"/></svg>
<div class="t" style="left:17px;top:217.2px;">Max. erlaubte</div>
<div class="t" style="left:17px;top:230.2px;">fehlerhafte Zeichen</div>
<div class="t" style="left:139px;top:217.2px;color:#000080;text-decoration:underline">4</div>
<div class="t" style="left:17px;top:253.2px;">Ein fehlerhaftes</div>
<div class="t" style="left:17px;top:266.2px;">Address-Bit erlaubt</div>
<svg class="a" style="left:117px;top:259px" width="16" height="16"><path d="M0.6 8.6L3.4 9.3L4.9 10.7L12.7 0.9L13.7 0.4L15 1.8L14.6 3.4L6.5 14.2L5.4 15.5L4.3 15L0.6 11.2Z" fill="#30e040" stroke="#000" stroke-width="1.1" stroke-linejoin="round"/><path d="M2 10l3 2.5" stroke="#80ff90" stroke-width="0.9"/></svg>
<svg class="a" style="left:1px;top:287px" width="16" height="14" shape-rendering="crispEdges"><path d="M0 2L2 0H8V2H14V13H2L0 11Z" fill="#ecec9c"/><rect x="1" y="6" width="12" height="6" fill="#e0e088"/><rect x="2" y="0" width="6" height="1" fill="#606030"/><rect x="1" y="1" width="1" height="1" fill="#606030"/><rect x="8" y="1" width="1" height="1" fill="#606030"/><rect x="8" y="2" width="6" height="1" fill="#606030"/><rect x="0" y="2" width="1" height="9" fill="#606030"/><rect x="0" y="5" width="11" height="1" fill="#606030"/><rect x="1" y="11" width="1" height="1" fill="#606030"/><rect x="2" y="12" width="13" height="1" fill="#000"/><rect x="14" y="3" width="1" height="10" fill="#000"/><rect x="11" y="6" width="1" height="2" fill="#000"/><rect x="12" y="8" width="1" height="2" fill="#000"/><rect x="13" y="10" width="1" height="2" fill="#000"/></svg>
<div class="t" style="left:17px;top:289.2px;font-weight:bold;letter-spacing:0.35px;">Voreinstellungen</div>
<div class="t" style="left:17px;top:310.2px;">Sprache</div>
<div class="t" style="left:139px;top:310.2px;color:#000080;text-decoration:underline">Zweite</div>
<div class="t" style="left:17px;top:331.2px;width:97px;overflow:hidden;">Akustischer Feldstärke</div>
<svg class="a" style="left:117px;top:329px" width="16" height="16"><path d="M4.3 2.2L12.2 13.6M13.8 2.8L2.6 13.5" fill="none" stroke="#100" stroke-width="4.8" stroke-linecap="round"/><path d="M4.3 2.2L12.2 13.6M13.8 2.8L2.6 13.5" fill="none" stroke="#c81820" stroke-width="2.9" stroke-linecap="round"/></svg>
<div class="t" style="left:17px;top:352.2px;">Alarmierung</div>
<div class="t" style="left:139px;top:352.2px;color:#000080;text-decoration:underline">laut</div>
</div>
<div class="a" style="left:682px;top:303px;width:16px;height:360px;background-color:#fff;background-image:repeating-conic-gradient(#d4d0c8 0 25%,#fff 0 50%);background-size:2px 2px"></div>
<div class="btn" style="left:682px;top:303px;width:16px;height:16px;border-top-color:#d4d0c8;border-left-color:#d4d0c8;box-shadow:inset 1px 1px 0 #fff,inset -1px -1px 0 #808080"></div>
<div class="btn" style="left:682px;top:319px;width:16px;height:16px;border-top-color:#d4d0c8;border-left-color:#d4d0c8;box-shadow:inset 1px 1px 0 #fff,inset -1px -1px 0 #808080"></div>
<div class="btn" style="left:682px;top:647px;width:16px;height:16px;border-top-color:#d4d0c8;border-left-color:#d4d0c8;box-shadow:inset 1px 1px 0 #fff,inset -1px -1px 0 #808080"></div>
<svg class="a" style="left:682px;top:303px" width="16" height="16" shape-rendering="crispEdges"><path d="M4 10h7v-1h-1v-1h-1v-1h-1v-1h-1v1h-1v1h-1v1h-1z" fill="#000"/></svg>
<svg class="a" style="left:682px;top:647px" width="16" height="16" shape-rendering="crispEdges"><path d="M4 6h7v1h-1v1h-1v1h-1v1h-1v-1h-1v-1h-1v-1h-1z" fill="#000"/></svg>
<div class="a" style="left:746px;top:297px;width:137px;height:57px;background:#fff;border-left:1px solid #808080;border-top:1px solid #808080;border-right:1px solid #fff;border-bottom:1px solid #fff"></div>
<div class="a" style="left:747px;top:298px;width:135px;height:55px;background:#fff;border-left:1px solid #404040;border-top:1px solid #404040;border-right:1px solid #d4d0c8;border-bottom:1px solid #d4d0c8"></div>
<div class="t" style="left:750px;top:301.5px;font-family:'Liberation Mono',monospace;font-size:13.33px;font-weight:bold;line-height:16px;">---SWISSPHONE---
------DE900-----
----------------</div>
<div class="a" style="left:727px;top:382px;width:183px;height:29px;background:#fff;border-left:1px solid #404040;border-top:1px solid #404040"></div>
<div class="a" style="left:729px;top:384px;width:179px;height:25px;background:#fff;border:1px solid #000"></div>
<div class="a" style="left:730px;top:385px;width:56px;height:20px;background:#d4d0c8;border-bottom:1px solid #808080"></div>
<div class="t" style="left:737px;top:390px;">Standby</div>
<div class="a" style="left:786px;top:384px;width:119px;height:22px;background:#fff;border:2px solid #000"></div>
<div class="vl" style="left:908px;top:384px;height:26px;background:#808080"></div>
<div class="hl" style="left:729px;top:409px;width:180px;background:#808080"></div>
<div class="a" style="left:935px;top:298px;width:224px;height:259px;background:#fff;border-left:1px solid #404040;border-top:1px solid #404040;border-right:1px solid #fff;border-bottom:1px solid #fff"></div>
<div class="a" style="left:936px;top:299px;width:222px;height:257px;background:#d4d0c8;border-left:1px solid #fff;border-top:1px solid #fff"></div>
<div class="a" style="left:937px;top:300px;width:219px;height:254px;background:#fff;border:1px solid #000"></div>
<div class="a" style="left:938px;top:301px;width:100px;height:252px;background:#d4d0c8;"></div>
<div class="vl" style="left:1038px;top:301px;height:252px;background:#808080"></div>
<div class="t" style="left:941px;top:306.2px;">Typ</div>
<div class="t" style="left:1041px;top:306.2px;">DE900 | alpha</div>
<div class="hl" style="left:938px;top:321px;width:100px;background:#808080"></div>
<div class="hl" style="left:1039px;top:321px;width:116px;background:#c0c0c0"></div>
<div class="t" style="left:941px;top:327.2px;">Serial</div>
<div class="t" style="left:1041px;top:327.2px;">C200602.01113</div>
<div class="hl" style="left:938px;top:342px;width:100px;background:#808080"></div>
<div class="hl" style="left:1039px;top:342px;width:116px;background:#c0c0c0"></div>
<div class="t" style="left:941px;top:348.2px;">Reihenfolge</div>
<div class="t" style="left:1041px;top:348.2px;">LEA-- | 14045 |&nbsp; 438</div>
<div class="hl" style="left:938px;top:363px;width:100px;background:#808080"></div>
<div class="hl" style="left:1039px;top:363px;width:116px;background:#c0c0c0"></div>
<div class="t" style="left:941px;top:369.2px;">Print / Rep</div>
<div class="t" style="left:1041px;top:369.2px;">I0 |</div>
<div class="hl" style="left:938px;top:384px;width:100px;background:#808080"></div>
<div class="hl" style="left:1039px;top:384px;width:116px;background:#c0c0c0"></div>
<div class="t" style="left:941px;top:390.2px;">Band</div>
<div class="t" style="left:1041px;top:390.2px;">2m OB &nbsp;&nbsp; 164..174</div>
<div class="hl" style="left:938px;top:405px;width:100px;background:#808080"></div>
<div class="hl" style="left:1039px;top:405px;width:116px;background:#c0c0c0"></div>
<div class="t" style="left:941px;top:411.2px;">Switch.range</div>
<div class="t" style="left:1041px;top:411.2px;">---</div>
<div class="hl" style="left:938px;top:426px;width:100px;background:#808080"></div>
<div class="hl" style="left:1039px;top:426px;width:116px;background:#c0c0c0"></div>
<div class="t" style="left:941px;top:432.2px;">Modulation</div>
<div class="t" style="left:1041px;top:432.2px;">20/25 kHz &nbsp; DFSK</div>
<div class="hl" style="left:938px;top:447px;width:100px;background:#808080"></div>
<div class="hl" style="left:1039px;top:447px;width:116px;background:#c0c0c0"></div>
<div class="t" style="left:941px;top:453.2px;">FW / SW</div>
<div class="t" style="left:1041px;top:453.2px;">02.10 | 00</div>
<div class="hl" style="left:938px;top:468px;width:100px;background:#808080"></div>
<div class="hl" style="left:1039px;top:468px;width:116px;background:#c0c0c0"></div>
<div class="t" style="left:941px;top:474.2px;">PSW / Prod</div>
<div class="t" style="left:1041px;top:474.2px;">04.50 | 00.57</div>
<div class="hl" style="left:938px;top:489px;width:100px;background:#808080"></div>
<div class="hl" style="left:1039px;top:489px;width:116px;background:#c0c0c0"></div>
<div class="t" style="left:941px;top:495.2px;">Kapazität NiCd</div>
<div class="t" style="left:1041px;top:495.2px;">500</div>
<div class="hl" style="left:938px;top:510px;width:100px;background:#808080"></div>
<div class="hl" style="left:1039px;top:510px;width:116px;background:#c0c0c0"></div>
<div class="t" style="left:941px;top:516.2px;">Kapazität NiMH</div>
<div class="t" style="left:1041px;top:516.2px;">1900</div>
<div class="hl" style="left:938px;top:531px;width:100px;background:#808080"></div>
<div class="hl" style="left:1039px;top:531px;width:116px;background:#c0c0c0"></div>
<div class="t" style="left:941px;top:537.2px;">Zeichensatz</div>
<div class="t" style="left:1041px;top:537.2px;">International</div>
<div class="a" style="left:140px;top:688px;width:59px;height:22px;background:#d4d0c8;border-left:1px solid #fff;border-right:1px solid #404040;border-bottom:1px solid #404040;box-shadow:inset -1px -1px 0 #808080"></div>
<div class="t" style="left:147px;top:692px;font-weight:bold;font-size:14px">RIC</div>
<div class="a" style="left:277px;top:688px;width:59px;height:22px;background:#d4d0c8;border-left:1px solid #fff;border-right:1px solid #404040;border-bottom:1px solid #404040;box-shadow:inset -1px -1px 0 #808080"></div>
<div class="t" style="left:281px;top:692px;font-weight:bold;font-size:14px">Fixtext</div>
<div class="a" style="left:336px;top:688px;width:186px;height:22px;background:#d4d0c8;border-left:1px solid #fff;border-right:1px solid #404040;border-bottom:1px solid #404040;box-shadow:inset -1px -1px 0 #808080"></div>
<div class="t" style="left:341px;top:692px;font-weight:bold;font-size:14px">RIC Auto Inkrementierung</div>
<div class="a" style="left:198px;top:687px;width:79px;height:25px;background:#d4d0c8;border-left:1px solid #fff;border-right:1px solid #404040;border-bottom:1px solid #404040;box-shadow:inset -1px -1px 0 #808080"></div>
<div class="t" style="left:206px;top:694px;font-weight:bold;font-size:14px">Optionen</div>
<!-- MDI CHILD END -->
</body></html>
